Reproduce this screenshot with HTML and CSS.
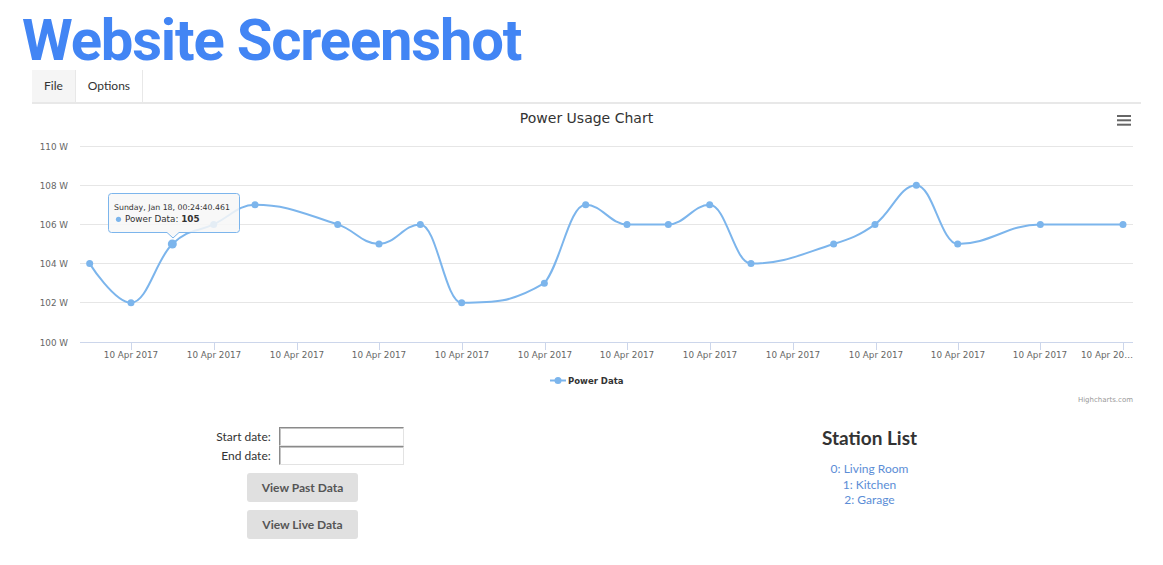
FILE: index.html
```html
<!DOCTYPE html>
<html lang="en">
<head>
  <meta charset="UTF-8">
  <title>Power Monitor</title>
  <link rel="stylesheet" href="styles.css">
</head>
<body>
<h1 class="page-title">Website Screenshot</h1>

<div class="app">
  <div class="menubar">
    <span class="menu-item active">File</span>
    <span class="menu-item">Options</span>
  </div>

  <div class="chart">
    <svg id="chart" width="1109" height="305" viewBox="0 0 1109 305">
      <text class="chart-title" x="554.5" y="19.3" text-anchor="middle">Power Usage Chart</text>
      <g class="menu-btn">
        <line x1="1085" y1="12" x2="1099" y2="12"/>
        <line x1="1085" y1="16.3" x2="1099" y2="16.3"/>
        <line x1="1085" y1="20.7" x2="1099" y2="20.7"/>
      </g>

      <g class="grid">
        <line x1="48" y1="42.5" x2="1101" y2="42.5"/>
        <line x1="48" y1="81.5" x2="1101" y2="81.5"/>
        <line x1="48" y1="120.5" x2="1101" y2="120.5"/>
        <line x1="48" y1="159.5" x2="1101" y2="159.5"/>
        <line x1="48" y1="198.5" x2="1101" y2="198.5"/>
      </g>
      <g class="axis">
        <line x1="48" y1="238.5" x2="1101" y2="238.5"/>
        <line x1="99.5" y1="238" x2="99.5" y2="246"/>
        <line x1="182.5" y1="238" x2="182.5" y2="246"/>
        <line x1="265.5" y1="238" x2="265.5" y2="246"/>
        <line x1="347.5" y1="238" x2="347.5" y2="246"/>
        <line x1="430.5" y1="238" x2="430.5" y2="246"/>
        <line x1="513.5" y1="238" x2="513.5" y2="246"/>
        <line x1="595.5" y1="238" x2="595.5" y2="246"/>
        <line x1="678.5" y1="238" x2="678.5" y2="246"/>
        <line x1="761.5" y1="238" x2="761.5" y2="246"/>
        <line x1="844.5" y1="238" x2="844.5" y2="246"/>
        <line x1="926.5" y1="238" x2="926.5" y2="246"/>
        <line x1="1008.5" y1="238" x2="1008.5" y2="246"/>
        <line x1="1091.5" y1="238" x2="1091.5" y2="246"/>
      </g>

      <g class="y-labels" text-anchor="end">
        <text x="36" y="45.5">110 W</text>
        <text x="36" y="84.7">108 W</text>
        <text x="36" y="123.9">106 W</text>
        <text x="36" y="163.1">104 W</text>
        <text x="36" y="202.3">102 W</text>
        <text x="36" y="241.5">100 W</text>
      </g>
      <g class="x-labels" text-anchor="middle">
        <text x="99" y="253.5">10 Apr 2017</text>
        <text x="182" y="253.5">10 Apr 2017</text>
        <text x="265" y="253.5">10 Apr 2017</text>
        <text x="347" y="253.5">10 Apr 2017</text>
        <text x="430" y="253.5">10 Apr 2017</text>
        <text x="513" y="253.5">10 Apr 2017</text>
        <text x="595" y="253.5">10 Apr 2017</text>
        <text x="678" y="253.5">10 Apr 2017</text>
        <text x="761" y="253.5">10 Apr 2017</text>
        <text x="844" y="253.5">10 Apr 2017</text>
        <text x="926" y="253.5">10 Apr 2017</text>
        <text x="1008" y="253.5">10 Apr 2017</text>
        <text x="1101" y="253.5" text-anchor="end">10 Apr 20…</text>
      </g>

      <g id="series"></g>

      <g class="tooltip">
        <path d="M79.5 89.5 H204.5 Q207.5 89.5 207.5 92.5 V125.5 Q207.5 128.5 204.5 128.5 H147 L141 134 L135 128.5 H79.5 Q76.5 128.5 76.5 125.5 V92.5 Q76.5 89.5 79.5 89.5 Z"/>
        <text class="tip-head" x="82" y="106">Sunday, Jan 18, 00:24:40.461</text>
        <circle cx="86.5" cy="115.3" r="2.6"/>
        <text class="tip-body" x="93" y="118.3">Power Data: <tspan class="tip-value">105</tspan></text>
      </g>

      <g class="legend">
        <line x1="518" y1="276.5" x2="534" y2="276.5"/>
        <circle cx="526" cy="276.5" r="3.5"/>
        <text x="536" y="279.6">Power Data</text>
      </g>
      <text class="credits" x="1101" y="298" text-anchor="end">Highcharts.com</text>
    </svg>
  </div>
</div>

<div class="panels">
  <div class="date-panel">
    <div class="date-form">
      <label for="start">Start date:</label>
      <input id="start" type="text">
      <label for="end">End date:</label>
      <input id="end" type="text">
    </div>
    <button class="btn">View Past Data</button>
    <button class="btn">View Live Data</button>
  </div>

  <div class="station-panel">
    <h2 class="station-title">Station List</h2>
    <ul class="station-list">
      <li><a href="#">0: Living Room</a></li>
      <li><a href="#">1: Kitchen</a></li>
      <li><a href="#">2: Garage</a></li>
    </ul>
  </div>
</div>

<script src="script.js"></script>
</body>
</html>
```

FILE: styles.css
```css
body{margin:0;background:#fff;color:#333;font-family:Lato,"Open Sans",sans-serif;}

.page-title{margin:0;padding:10px 0 0 22px;font:700 58px/60px Roboto,sans-serif;letter-spacing:-1.2px;color:#4285f4;}

.app{padding:0 22px 0 32px;}

/* top menu */
.menubar{display:flex;height:32px;border-bottom:2px solid #e8e8e8;}
.menu-item{padding:0 12px;line-height:32px;font-size:12px;color:#333;border-right:1px solid #e8e8e8;}
.menu-item.active{background:#f5f5f5;}

/* chart */
.chart svg{display:block;}
.chart text{font-family:"DejaVu Sans",Verdana,sans-serif;}
.chart-title{font-size:14px;fill:#333;}
.menu-btn line{stroke:#666;stroke-width:2;}
.grid line{stroke:#e6e6e6;stroke-width:1;}
.axis line{stroke:#ccd6eb;stroke-width:1;}
.y-labels text,.x-labels text{font-size:8.8px;fill:#666;}
.series-line{fill:none;stroke:#7cb5ec;stroke-width:2;stroke-linejoin:round;stroke-linecap:round;}
.series-marker{fill:#7cb5ec;}
.tooltip path{fill:rgba(247,247,247,0.85);stroke:#7cb5ec;stroke-width:1;}
.tooltip circle{fill:#7cb5ec;}
.tip-head{font-size:7.8px;fill:#333;}
.tip-body{font-size:8.8px;fill:#333;}
.tip-value{font-weight:700;}
.legend line{stroke:#7cb5ec;stroke-width:2;}
.legend circle{fill:#7cb5ec;}
.legend text{font-size:8.5px;font-weight:700;fill:#333;}
.credits{font-size:7px;fill:#999;}

/* lower panels */
.panels{display:grid;grid-template-columns:1fr 1fr;margin:0 10px 0 19px;}

.date-panel{display:flex;flex-direction:column;align-items:center;padding-top:18px;}
.date-form{display:grid;grid-template-columns:auto 125px;column-gap:8px;align-items:center;margin-left:15px;}
.date-form label{text-align:right;font-size:12px;color:#333;}
.date-form input{width:125px;height:19px;box-sizing:border-box;margin:0;padding:0 3px;border:1px solid;border-color:#8a8a8a #e3e3e3 #e3e3e3 #8a8a8a;box-shadow:inset 1px 1px 0 #c4c4c4;background:#fff;}
.btn{width:111px;height:29px;margin-top:8px;border:0;border-radius:3px;background:#e0e0e0;color:#555;font:700 12px Lato,sans-serif;cursor:pointer;}

.station-panel{text-align:center;padding-top:17px;}
.station-title{margin:0;font:700 19px Lato,sans-serif;color:#333;}
.station-list{list-style:none;margin:12px 0 0;padding:0;font-size:12px;line-height:15.5px;}
.station-list a{color:#5b8dd6;text-decoration:none;}
```

FILE: script.js
```js
// power readings: [slot, watts]
var data = [[0,104],[1,102],[2,105],[3,106],[4,107],[6,106],[7,105],[8,106],[9,102],
            [11,103],[12,107],[13,106],[14,106],[15,107],[16,104],[18,105],[19,106],
            [20,108],[21,105],[23,106],[25,106]];
var hoverIndex = 2;
var NS = "http://www.w3.org/2000/svg";
var group = document.getElementById("series");

var points = data.map(function (d) {
  return { x: 57.67 + 41.333 * d[0], y: 238 - (d[1] - 100) * 19.6 };
});

// same smoothing as highcharts spline
function splineSegment(i) {
  var p = points[i], last = points[i - 1], next = points[i + 1];
  var s = 1.5, den = s + 1, lx, ly, rx, ry;
  if (last && next) {
    lx = (s * p.x + last.x) / den; ly = (s * p.y + last.y) / den;
    rx = (s * p.x + next.x) / den; ry = (s * p.y + next.y) / den;
    var corr = 0;
    if (rx !== lx) corr = ((ry - ly) * (rx - p.x)) / (rx - lx) + p.y - ry;
    ly += corr; ry += corr;
    if (ly > last.y && ly > p.y) { ly = Math.max(last.y, p.y); ry = 2 * p.y - ly; }
    else if (ly < last.y && ly < p.y) { ly = Math.min(last.y, p.y); ry = 2 * p.y - ly; }
    if (ry > next.y && ry > p.y) { ry = Math.max(next.y, p.y); ly = 2 * p.y - ry; }
    else if (ry < next.y && ry < p.y) { ry = Math.min(next.y, p.y); ly = 2 * p.y - ry; }
    p.rx = rx; p.ry = ry;
  }
  if (!last) return "M" + p.x + " " + p.y;
  return " C" + (last.rx !== undefined ? last.rx : last.x) + " " + (last.ry !== undefined ? last.ry : last.y) +
    " " + (lx !== undefined ? lx : p.x) + " " + (ly !== undefined ? ly : p.y) + " " + p.x + " " + p.y;
}

var d = "";
for (var i = 0; i < points.length; i++) d += splineSegment(i);

var line = document.createElementNS(NS, "path");
line.setAttribute("d", d);
line.setAttribute("class", "series-line");
group.appendChild(line);

points.forEach(function (p, idx) {
  var c = document.createElementNS(NS, "circle");
  c.setAttribute("cx", p.x);
  c.setAttribute("cy", p.y);
  c.setAttribute("r", idx === hoverIndex ? 4.5 : 3.5);
  c.setAttribute("class", "series-marker");
  group.appendChild(c);
});
```
